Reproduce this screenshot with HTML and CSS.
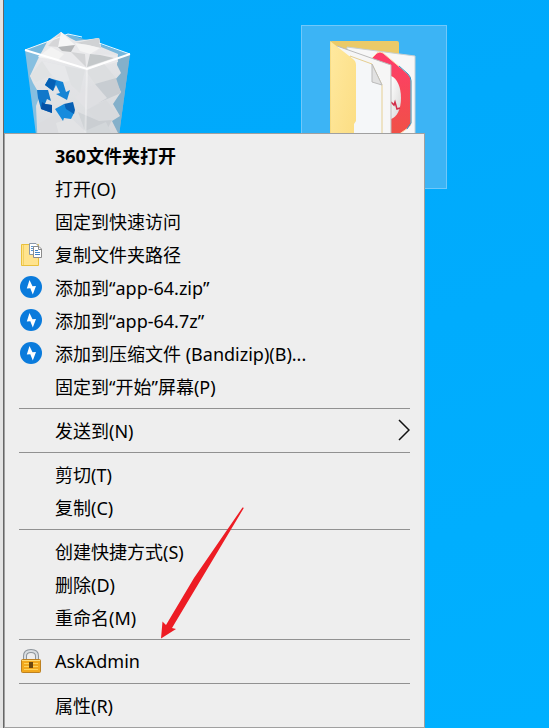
FILE: index.html
```
<!DOCTYPE html>
<html lang="zh-CN">
<head>
  <meta charset="UTF-8">
  <title>桌面</title>
  <link rel="stylesheet" href="styles.css">
</head>
<body>
  <!-- shared bandizip icon -->
  <svg class="defs" aria-hidden="true">
    <symbol id="bandizip" viewBox="0 0 22 22">
      <circle cx="11" cy="11" r="11" fill="#0a7bdc"/>
      <path d="M9.500 4 12.500 10.300 16 10 12.800 18.500 10.300 12.200 6.800 12.500Z" fill="#fff"/>
    </symbol>
  </svg>

  <main class="desktop">
    <div class="desktop-icon recycle-bin">
      <svg width="116" height="120" viewBox="0 0 116 120" role="img" aria-label="回收站">
        <defs>
          <linearGradient id="paper" x1="0" y1="0" x2="0" y2="1">
            <stop offset="0" stop-color="#e9e9eb"/>
            <stop offset="1" stop-color="#d2d5d9"/>
          </linearGradient>
        </defs>
        <path d="M5 20 48 4 110 24 97 120H18Z" fill="#76b7dc"/>
        <path d="M67 39 110 24 97 120H65Z" fill="#84b0ca"/>
        <path d="M18 29 27 12 34 7 41 2 50 8 56 11 79 8 81 17 98 24 97 35 101 43 95 50 101 62 93 74 100 86 92 91 98 103 96 120H18L16 76 20 65 13 53 10 46Z" fill="url(#paper)"/>
        <path d="M27 16 41 2 54 15 57 12 79 8 81 17 74 24 97 25 98 32 67 39 18 27Z" fill="#e9e9eb"/>
        <path d="M41 2 55 15 38 17Z" fill="#f6f6f6"/>
        <path d="M41 2 28 16 38 17Z" fill="#d6d6d8"/>
        <path d="M38 17 55 15 51 22 42 21Z" fill="#b4b6b8"/>
        <path d="M55 13 79 8 81 18 68 15Z" fill="#d0d2d4"/>
        <path d="M55 13 68 15 80 18 70 24 60 21Z" fill="#f4f4f4"/>
        <path d="M51 22 65 24 66 37 60 31Z" fill="#d3d4d6"/>
        <path d="M70 24 80 25 94 28 67 37Z" fill="#c4c8ca"/>
        <path d="M18 27 38 30 44 24 31 17Z" fill="#f3f3f3"/>
        <path d="M10 46 22 31 45 36 30 46 16 52Z" fill="#dcdee0"/>
        <path d="M22 31 45 36 57 49 40 53 30 43Z" fill="#e4e5e7"/>
        <path d="M45 36 65 40 60 63 51 55Z" fill="#dadcdf"/>
        <path d="M66 41 84 34 96 48 75 54Z" fill="#dcdee0"/>
        <path d="M75 54 96 48 101 63 78 73Z" fill="#c8cdd2"/>
        <path d="M55 67 75 54 87 68 67 80Z" fill="#dedfe2"/>
        <path d="M67 80 86 70 99 86 79 91Z" fill="#d8dadd"/>
        <path d="M58 82 79 91 92 90 84 106 65 101Z" fill="#caced2"/>
        <path d="M18 94 36 84 54 100 36 120H18Z" fill="#d6d8db"/>
        <path d="M36 93 51 88 65 101 56 120H43Z" fill="#dfe0e2"/>
        <path d="M65 101 86 92 96 114 81 120H65Z" fill="#d3d7da"/>
        <path d="M5 20 67 39 65 120H18Z" fill="#fff" opacity=".12"/>
        <path d="M67 39 65 120" stroke="#fff" stroke-width="2" opacity=".35"/>
        <path d="M5 20 48 4" fill="none" stroke="#f2f6f8" stroke-width="1"/>
        <path d="M48 4 62 7M79 13 110 24" fill="none" stroke="#eef8ff" stroke-width="1"/>
        <path d="M5 20 67 39 110 24" fill="none" stroke="#fff" stroke-width="2"/>
        <!-- recycle arrows -->
        <path d="M29 48 43 52 46 62 50 60 47 70 36 64 40 63 36 55 33 61 25 55Z" fill="#1584d5"/>
        <path d="M29 48 36 51 33 61 25 55Z" fill="#0560b5"/>
        <path d="M17 60 28 60 31 71 27 69 25 74 32 75V83L21 79 18 68Z" fill="#1178ca"/>
        <path d="M22 72 25 74 32 75V83L21 79Z" fill="#0752a6"/>
        <path d="M35 79 44 74 45 76 54 83 51 89 44 88 43 91Z" fill="#168bdd"/>
        <path d="M44 74 53 72 55 80 54 84 46 79Z" fill="#0760b4"/>
      </svg>
    </div>

    <div class="desktop-icon folder selected">
      <svg width="90" height="120" viewBox="0 0 90 120" role="img" aria-label="文件夹">
        <defs>
          <linearGradient id="flap" x1="0" y1="0" x2="1" y2="1">
            <stop offset="0" stop-color="#ffe99f"/>
            <stop offset="1" stop-color="#fbdc80"/>
          </linearGradient>
          <linearGradient id="logo" x1="0" y1="0" x2="0" y2="1">
            <stop offset="0" stop-color="#ff3c6b"/>
            <stop offset="1" stop-color="#ee5441"/>
          </linearGradient>
          <linearGradient id="egg" x1="0" y1="0" x2="1" y2="1">
            <stop offset="0" stop-color="#fff"/>
            <stop offset="1" stop-color="#d7d7d7"/>
          </linearGradient>
        </defs>
        <path d="M0 2Q0 0 2 0H67Q69 0 69 2V120H0Z" fill="#ebca68"/>
        <path d="M17 6 85 15V120H17Z" fill="#f7f7f7" stroke="#c9d0d3" stroke-width="1"/>
        <path d="M42 17 47 12Q50 10 53 12L78 33Q81 36 81 40V82Q81 85 78 87L68 94 42 105Z" fill="url(#logo)" stroke="#ffd9ac" stroke-width="1"/>
        <path d="M69 25 78 33Q81 36 81 40V82L77 88" fill="none" stroke="#3295ca" stroke-width="1"/>
        <path d="M61 35C67 37 71 46 71 57S67 76 61 78Z" fill="url(#egg)"/>
        <path d="M61 61 64 64 65 61 67 68 70 67" fill="none" stroke="#d32d49" stroke-width="1.500"/>
        <path d="M7 5 61 24V120H7Z" fill="#f6f6f6"/>
        <path d="M7 5 61 24V120" fill="none" stroke="#bbb" stroke-width="1"/>
        <path d="M20 15 42 23 52 44V120H20Z" fill="#f5f7f9" stroke="#e5ce91" stroke-width="1"/>
        <path d="M42 23V41L52 44Z" fill="#e1e1e1" stroke="#bbb" stroke-width="1"/>
        <path d="M0 0 23 18Q26 20 26 24V80L24 83V120H0Z" fill="url(#flap)"/>
        <path d="M0 0V120" stroke="#efd071" stroke-width="1"/>
      </svg>
    </div>

    <div class="context-menu" role="menu">
      <button class="menu-item default" role="menuitem"><span class="menu-icon"></span>360文件夹打开</button>
      <button class="menu-item" role="menuitem"><span class="menu-icon"></span>打开(O)</button>
      <button class="menu-item" role="menuitem"><span class="menu-icon"></span>固定到快速访问</button>
      <button class="menu-item" role="menuitem">
        <span class="menu-icon">
          <svg width="24" height="24" viewBox="0 0 24 24">
            <path d="M2.500 2.500H19.500V23.500H2.500Z" fill="#ffe38d" stroke="#e9c03c"/>
            <path d="M4.500 3V23" stroke="#f3d161"/>
            <path d="M10.500 1.500H17L19.500 4V12.500H10.500Z" fill="#fff" stroke="#8b98a8"/>
            <path d="M12 4.500H15M12 6.500H15M12 8.500H15" stroke="#5c96cd"/>
            <path d="M14.500 4.500H20L22.500 7V15.500H14.500Z" fill="#fff" stroke="#8b8b8b"/>
            <path d="M19.500 5V7.500H22" fill="none" stroke="#8b8b8b"/>
            <path d="M16 8.500H19M16 10.500H21M16 12.500H21" stroke="#4285c7"/>
          </svg>
        </span>
        复制文件夹路径
      </button>
      <button class="menu-item" role="menuitem">
        <span class="menu-icon"><svg width="22" height="22"><use href="#bandizip"/></svg></span>
        添加到“app-64.zip”
      </button>
      <button class="menu-item" role="menuitem">
        <span class="menu-icon"><svg width="22" height="22"><use href="#bandizip"/></svg></span>
        添加到“app-64.7z”
      </button>
      <button class="menu-item" role="menuitem">
        <span class="menu-icon"><svg width="22" height="22"><use href="#bandizip"/></svg></span>
        添加到压缩文件 (Bandizip)(B)...
      </button>
      <button class="menu-item" role="menuitem"><span class="menu-icon"></span>固定到“开始”屏幕(P)</button>
      <hr class="separator">
      <button class="menu-item" role="menuitem" aria-haspopup="menu">
        <span class="menu-icon"></span>发送到(N)
        <svg class="chevron" width="14" height="22" viewBox="0 0 14 22">
          <path d="M3 1 13 11 3 21" fill="none" stroke="#111" stroke-width="1.500"/>
        </svg>
      </button>
      <hr class="separator">
      <button class="menu-item" role="menuitem"><span class="menu-icon"></span>剪切(T)</button>
      <button class="menu-item" role="menuitem"><span class="menu-icon"></span>复制(C)</button>
      <hr class="separator">
      <button class="menu-item" role="menuitem"><span class="menu-icon"></span>创建快捷方式(S)</button>
      <button class="menu-item" role="menuitem"><span class="menu-icon"></span>删除(D)</button>
      <button class="menu-item" role="menuitem"><span class="menu-icon"></span>重命名(M)</button>
      <hr class="separator">
      <button class="menu-item" role="menuitem">
        <span class="menu-icon">
          <svg width="22" height="24" viewBox="0 0 22 24">
            <path d="M5 12V7Q5 2 11 2T17 7V12" fill="none" stroke="#8d949b" stroke-width="4"/>
            <path d="M5 11V7Q5 2 11 2T17 7V11" fill="none" stroke="#d9dee2" stroke-width="2"/>
            <rect x="1.500" y="10.500" width="19" height="13" rx="1" fill="#f2a91e" stroke="#bd8122"/>
            <path d="M2 11.500H20" stroke="#ffdc7b"/>
            <path d="M4 14.500H18M4 17.500H18M4 20.500H18" stroke="#ffd35c"/>
            <rect x="9" y="13" width="4" height="6" fill="#6c4811"/>
          </svg>
        </span>
        AskAdmin
      </button>
      <hr class="separator">
      <button class="menu-item" role="menuitem"><span class="menu-icon"></span>属性(R)</button>
    </div>

    <svg class="arrow" width="86" height="134" viewBox="0 0 86 134" aria-hidden="true">
      <path d="M82.500 1.500Q84 1 83.500 2.500L12 122 16 123 1 132.500 2.500 115.500 6 119 34 72Z" fill="#ed1c24"/>
    </svg>
  </main>
</body>
</html>
```
FILE: styles.css
```
* {
  box-sizing: border-box;
}

body {
  margin: 0;
  font-family: "Noto Sans", "Noto Sans CJK SC", sans-serif;
  font-size: 18px;
  color: #000;
}

.defs {
  display: none;
}

.desktop {
  position: relative;
  min-height: 100vh;
  overflow: hidden;
  background: linear-gradient(165deg, #00a8fb, #00b0ff);
  border-left: 3px solid #e3e3e3;
  box-shadow: inset 1px 0 #666;
}

.desktop-icon {
  position: absolute;
}

.desktop-icon svg {
  display: block;
}

.recycle-bin {
  left: 17px;
  top: 30px;
}

.folder {
  left: 298px;
  top: 25px;
  padding: 15px 26px 27px 28px;
}

.folder.selected {
  background: #3cb4f5;
  border: 1px solid #70c8fa;
}

.context-menu {
  position: absolute;
  left: 1px;
  top: 133px;
  width: 421px;
  padding: 5px 0;
  background: #eee;
  border: 1px solid #a0a0a0;
}

.menu-item {
  display: flex;
  align-items: center;
  width: 100%;
  height: 33px;
  padding: 0 14px 2px;
  border: none;
  background: none;
  color: inherit;
  font: inherit;
  text-align: left;
  white-space: nowrap;
}

.menu-item:hover {
  background: #fff;
}

.menu-item.default {
  font-weight: bold;
}

.menu-icon {
  display: flex;
  justify-content: center;
  flex: none;
  width: 24px;
  margin-right: 12px;
}

.chevron {
  margin-left: auto;
}

.separator {
  height: 1px;
  margin: 5px 14px;
  border: none;
  background: #919191;
}

/* red pointer drawn over the menu */
.arrow {
  position: absolute;
  left: 157px;
  top: 506px;
  pointer-events: none;
}
```
